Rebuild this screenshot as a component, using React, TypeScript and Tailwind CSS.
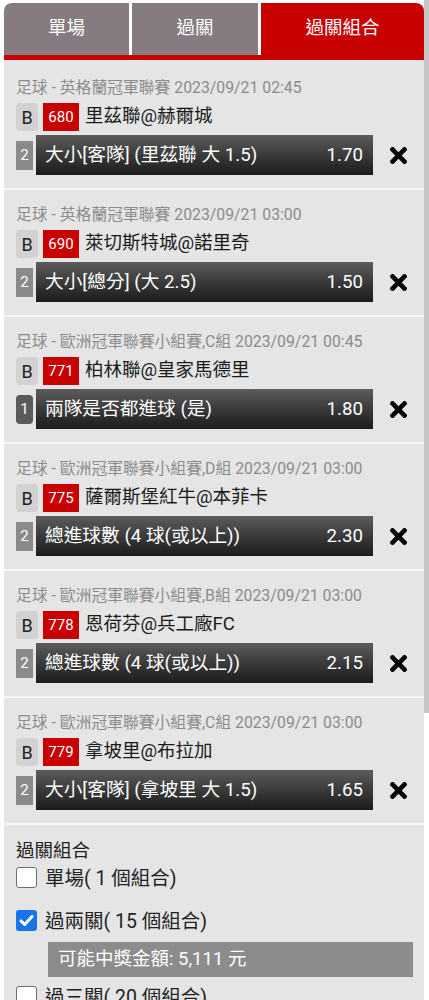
import React from "react";
import { FaTimes } from "react-icons/fa";

type Bet = {
  league: string;
  num: string;
  teams: string;
  leg: string;
  dark?: boolean;
  market: string;
  odds: string;
};

const bets: Bet[] = [
  { league: "足球 - 英格蘭冠軍聯賽 2023/09/21 02:45", num: "680", teams: "里茲聯@赫爾城", leg: "2", market: "大小[客隊] (里茲聯 大 1.5)", odds: "1.70" },
  { league: "足球 - 英格蘭冠軍聯賽 2023/09/21 03:00", num: "690", teams: "萊切斯特城@諾里奇", leg: "2", market: "大小[總分] (大 2.5)", odds: "1.50" },
  { league: "足球 - 歐洲冠軍聯賽小組賽,C組 2023/09/21 00:45", num: "771", teams: "柏林聯@皇家馬德里", leg: "1", dark: true, market: "兩隊是否都進球 (是)", odds: "1.80" },
  { league: "足球 - 歐洲冠軍聯賽小組賽,D組 2023/09/21 03:00", num: "775", teams: "薩爾斯堡紅牛@本菲卡", leg: "2", market: "總進球數 (4 球(或以上))", odds: "2.30" },
  { league: "足球 - 歐洲冠軍聯賽小組賽,B組 2023/09/21 03:00", num: "778", teams: "恩荷芬@兵工廠FC", leg: "2", market: "總進球數 (4 球(或以上))", odds: "2.15" },
  { league: "足球 - 歐洲冠軍聯賽小組賽,C組 2023/09/21 03:00", num: "779", teams: "拿坡里@布拉加", leg: "2", market: "大小[客隊] (拿坡里 大 1.5)", odds: "1.65" },
];

function BetSection({ bet, first }: { bet: Bet; first: boolean }) {
  return (
    <div className={`bg-[#e5e5e5] pl-[12px] pb-[13px] ${first ? "pt-[17px]" : "pt-[14px]"}`}>
      <div className="text-[15.8px] leading-[22px] text-[#8c8c8c] whitespace-nowrap">{bet.league}</div>
      <div className="mt-[4px] flex items-center h-[28px]">
        <div className="w-[22px] h-[28px] rounded-[4px] bg-[#d2d2d2] text-[#222] text-[18px] flex items-center justify-center">B</div>
        <div className="ml-[5px] w-[36px] h-[28px] bg-[#c80000] text-white text-[15px] flex items-center justify-center">{bet.num}</div>
        <div className="ml-[6px] text-[18.5px] text-[#1a1a1a] whitespace-nowrap">{bet.teams}</div>
      </div>
      <div className="mt-[4px] flex items-center h-[40px]">
        <div
          className={`w-[17px] h-[29px] text-white text-[15px] flex items-center justify-center ${
            bet.dark ? "bg-[#5a5a5a] rounded-[4px]" : "bg-[#8a8a8a]"
          }`}
        >
          {bet.leg}
        </div>
        <div className="ml-[3px] w-[337px] h-[40px] bg-gradient-to-b from-[#5c5c5c] to-[#1c1c1c] flex items-center justify-between pl-[9px] pr-[10px] text-white text-[18.7px] whitespace-nowrap">
          <span>{bet.market}</span>
          <span>{bet.odds}</span>
        </div>
        <FaTimes className="ml-[13px] text-black" size={25} />
      </div>
    </div>
  );
}

function Checkbox({ checked }: { checked: boolean }) {
  if (checked) {
    return (
      <div className="w-[21px] h-[21px] rounded-[3px] bg-[#1a73e8] flex items-center justify-center shrink-0">
        <svg width="17" height="17" viewBox="0 0 16 16">
          <path d="M2.8 8.4 L6.3 11.8 L13.2 4.2" fill="none" stroke="white" strokeWidth="2.8" strokeLinecap="round" strokeLinejoin="round" />
        </svg>
      </div>
    );
  }
  return <div className="w-[21px] h-[21px] rounded-[3px] bg-white border-[1.5px] border-[#6f6f6f] shrink-0" />;
}

export default function App() {
  return (
    <div
      className="relative w-[429px] min-h-[1000px] bg-white pl-[4px] pr-[5px] pt-[3px]"
      style={{ fontFamily: 'Roboto, "Noto Sans CJK TC", sans-serif' }}
    >
      <div className="flex h-[52px] gap-[3px] text-white text-[18.5px]">
        <div className="w-[125px] bg-[#857b80] rounded-tl-[8px] flex items-center justify-center">單場</div>
        <div className="w-[126px] bg-[#857b80] flex items-center justify-center">過關</div>
        <div className="flex-1 bg-[#c80000] rounded-tr-[8px] flex items-center justify-center">過關組合</div>
      </div>
      <div className="h-[5px] bg-[#c80000]" />
      <div className="flex flex-col gap-[2px] bg-[#f6f6f6]">
        {bets.map((b, i) => (
          <BetSection key={i} bet={b} first={i === 0} />
        ))}
        <div className="bg-[#e5e5e5] pl-[12px] pt-[15px] h-[200px]">
          <div className="text-[18.5px] leading-[22px] text-[#222]">過關組合</div>
          <div className="mt-[3px] flex items-start h-[28px]">
            <div className="mt-[2px]"><Checkbox checked={false} /></div>
            <div className="ml-[8px] text-[19.5px] leading-[28px] text-[#222] whitespace-nowrap">單場( 1 個組合)</div>
          </div>
          <div className="mt-[15px] flex items-start h-[28px]">
            <div className="mt-[2px]"><Checkbox checked={true} /></div>
            <div className="ml-[8px] text-[19.5px] leading-[28px] text-[#222] whitespace-nowrap">過兩關( 15 個組合)</div>
          </div>
          <div className="mt-[6px] ml-[32px] w-[365px] h-[35px] bg-[#8c8c8c] text-white text-[18.5px] flex items-center pl-[10px] whitespace-nowrap">
            可能中獎金額: 5,111 元
          </div>
          <div className="mt-[7px] flex items-start h-[28px]">
            <div className="mt-[2px]"><Checkbox checked={false} /></div>
            <div className="ml-[8px] text-[19.5px] leading-[28px] text-[#222] whitespace-nowrap">過三關( 20 個組合)</div>
          </div>
        </div>
      </div>
      <div className="absolute right-0 top-0 w-[5px] h-[713px] bg-[#c6c6c6]" />
    </div>
  );
}
